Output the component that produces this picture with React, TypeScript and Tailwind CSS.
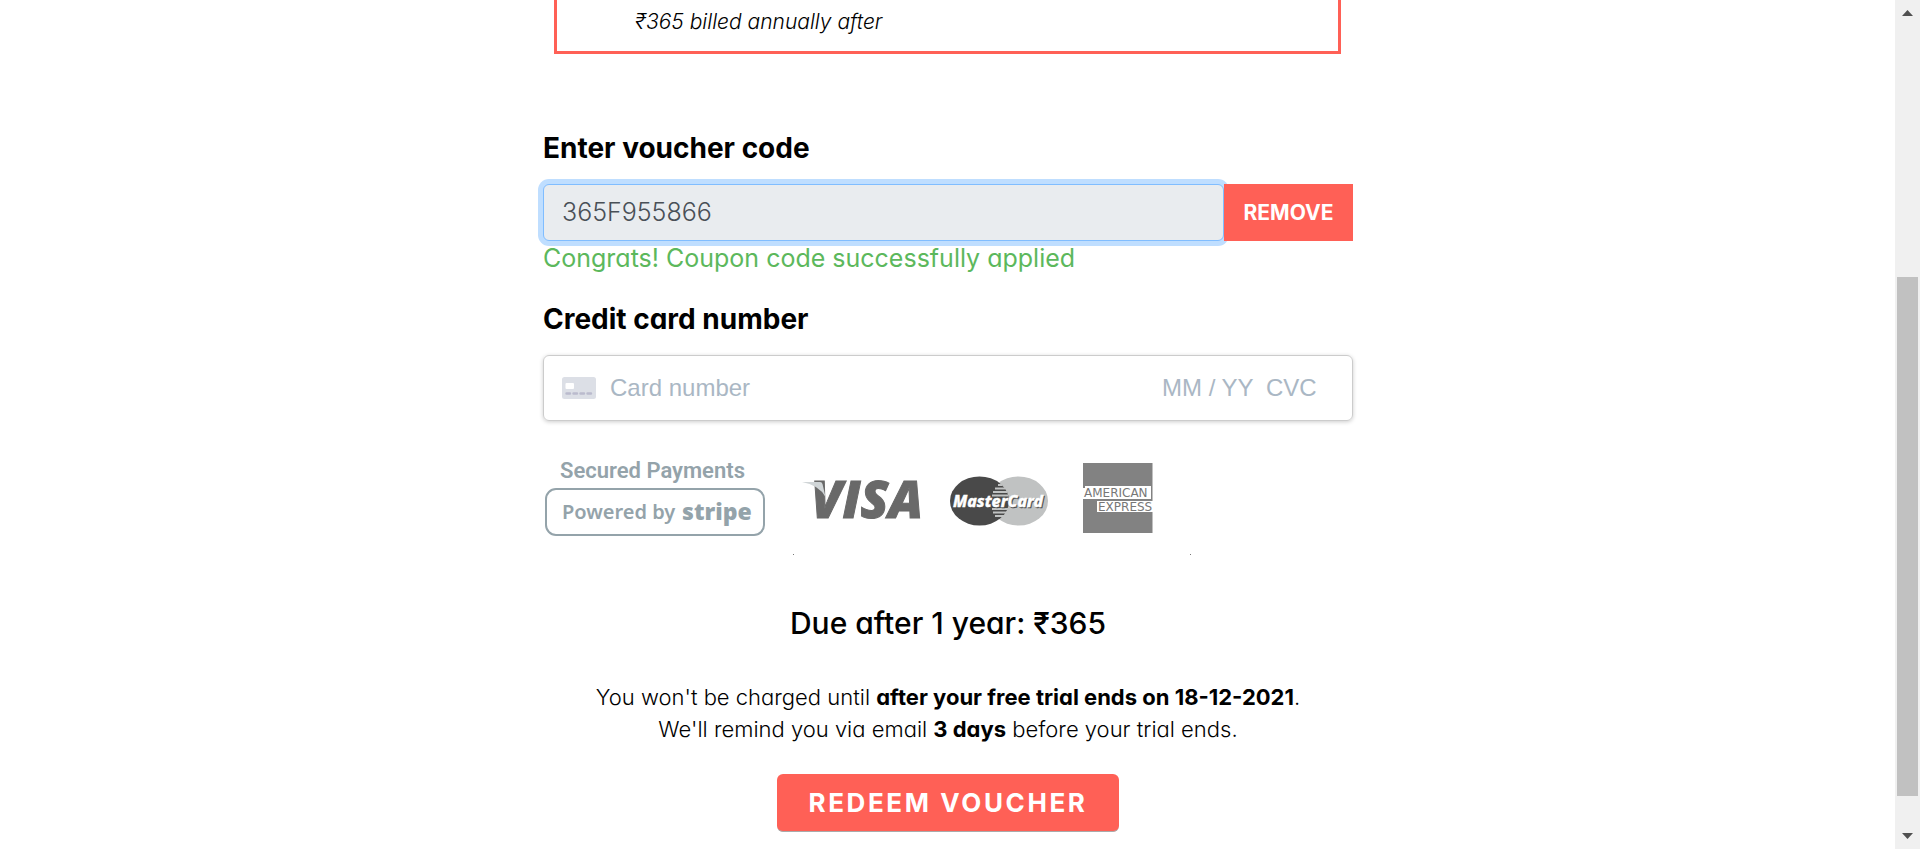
import React from "react";

function VoucherForm() {
  return (
    <section className="flex flex-col">
      <label htmlFor="voucher" className="text-[28px] leading-10 font-bold">
        Enter voucher code
      </label>
      <div className="mt-4 flex h-[57px]">
        <input
          id="voucher"
          readOnly
          defaultValue="365F955866"
          className="min-w-0 flex-1 rounded-md border border-[#80bdff] bg-[#e9ecef] px-[18px] text-[25px] font-light text-[#495057] shadow-[0_0_0_5px_#bfdeff] outline-none"
        />
        <button
          type="button"
          className="relative w-[129px] bg-[#ff6056] text-[21px] font-bold text-white"
        >
          REMOVE
        </button>
      </div>
      <p className="text-[25px] leading-[34px] text-[#5cb85c]">
        Congrats! Coupon code successfully applied
      </p>
    </section>
  );
}

function CardIcon() {
  return (
    <svg width="34" height="22" viewBox="0 0 34 22" aria-hidden="true" className="shrink-0">
      <rect width="34" height="22" rx="2.5" fill="#dcdfe6" />
      <rect x="3.5" y="6" width="8.5" height="6" rx="1" fill="#fff" />
      <path d="M4.500 16.500h3.500M11.500 16.500h3.500M18.500 16.500h3.500M25.500 16.500h3.500" stroke="#babbcd" strokeWidth="2.4" strokeLinecap="round" />
    </svg>
  );
}

function CardForm() {
  const field =
    "bg-transparent text-2xl text-[#32325d] placeholder:text-[#aab7c4] outline-none";
  return (
    <section className="mt-6 flex flex-col">
      <label htmlFor="card" className="text-[28px] leading-10 font-bold">
        Credit card number
      </label>
      <div className="mt-4 flex h-[66px] items-center rounded-md border border-[#ccc] px-[18px] font-['Liberation_Sans',sans-serif] shadow-[0_1px_4px_rgba(0,0,0,0.2)]">
        <CardIcon />
        <input id="card" placeholder="Card number" className={field + " ml-[14px] min-w-0 flex-1"} />
        <input aria-label="Expiry date" placeholder="MM / YY" className={field + " w-[104px]"} />
        <input aria-label="CVC" placeholder="CVC" className={field + " w-[68px]"} />
      </div>
    </section>
  );
}

function StripeBadge() {
  return (
    <svg width="224" height="80" viewBox="0 0 224 80" role="img" aria-label="Secured Payments, powered by Stripe">
      <g fill="#94a3aa" fontFamily="Roboto, sans-serif" fontWeight="600">
        <text x="17" y="19" fontSize="22">Secured Payments</text>
        <rect x="3" y="30" width="218" height="46" rx="10" fill="none" stroke="#94a3aa" strokeWidth="2" />
        <text x="19" y="60" fontSize="20" fontFamily="'Noto Sans', sans-serif">Powered by</text>
        <text x="139" y="61" fontSize="23" fontWeight="900" fontFamily="'Noto Sans', sans-serif">stripe</text>
      </g>
    </svg>
  );
}

function VisaLogo() {
  return (
    <svg width="124" height="40" viewBox="0 0 124 40" role="img" aria-label="Visa" className="overflow-visible">
      <text x="9" y="37" fontSize="51" fontWeight="800" fontStyle="italic" fill="#696969" stroke="#696969" strokeWidth="1" fontFamily="'Open Sans', sans-serif">
        VISA
      </text>
      <path d="M0 1h18q2 0 2.500 2l3 13Q17 4 0 1z" fill="#d0d5d7" />
    </svg>
  );
}

function MasterCardLogo() {
  return (
    <svg width="98" height="50" viewBox="0 0 98 50" role="img" aria-label="MasterCard">
      <ellipse cx="68.500" cy="25" rx="29.500" ry="24.500" fill="#c0c2c2" />
      <ellipse cx="29.500" cy="25" rx="29.500" ry="24.500" fill="#494949" />
      <path d="M48 9h4M45 12.500h10M43 16h14M42 19.500h16M42 33h16M43 36.500h14M45 40h10" stroke="#c0c2c2" strokeWidth="2" />
      <g fontFamily="'Noto Sans', sans-serif" fontSize="16" fontWeight="800" fontStyle="italic">
        <text x="4" y="32" fill="#494949" stroke="#494949" strokeWidth="0.5">MasterCard</text>
        <text x="3" y="31" fill="#fff" stroke="#fff" strokeWidth="0.4">MasterCard</text>
      </g>
    </svg>
  );
}

function AmexLogo() {
  return (
    <svg width="70" height="70" viewBox="0 0 70 70" role="img" aria-label="American Express">
      <rect width="69.500" height="70" fill="#828282" />
      <path d="M0 25h2v-2h66v13H0zM14 38h56v11H14z" fill="#fff" />
      <g fontFamily="'DejaVu Sans', sans-serif" fontSize="12" fill="#777">
        <text x="1" y="34">AMERICAN</text>
        <text x="15" y="48">EXPRESS</text>
      </g>
    </svg>
  );
}

function PaymentLogos() {
  return (
    <div className="mt-[38px] flex h-24 items-start">
      <StripeBadge />
      <div className="ml-[26px] flex h-24 w-[398px] flex-col justify-between">
        <div className="flex h-[80px] items-center pt-1 pl-[9px]">
          <VisaLogo />
          <div className="ml-6 flex"><MasterCardLogo /></div>
          <div className="-mt-[6px] ml-[35px] flex"><AmexLogo /></div>
        </div>
        <div className="flex justify-between">
          <span className="size-px bg-[#777]" />
          <span className="size-px bg-[#777]" />
        </div>
      </div>
    </div>
  );
}

function ScrollTrack() {
  return (
    <div aria-hidden="true" className="flex w-[25px] shrink-0 flex-col items-center bg-[#f0f0f0] py-[10px]">
      <svg width="11" height="6" viewBox="0 0 11 6"><path d="M0 6 5.500 0 11 6z" fill="#505050" /></svg>
      <div className="flex w-[21px] flex-1 flex-col">
        <div className="grow-[261]" />
        <div className="grow-[519] bg-[#c1c1c1]" />
        <div className="grow-[37]" />
      </div>
      <svg width="11" height="6" viewBox="0 0 11 6"><path d="M0 0 5.500 6 11 0z" fill="#505050" /></svg>
    </div>
  );
}

export default function App() {
  return (
    <div className="flex min-h-screen bg-white font-[Inter,sans-serif] text-black [font-feature-settings:'cv11']">
      <main className="flex min-w-0 flex-1 flex-col items-center pb-3">
        <div className="w-full max-w-[811px] pl-px">
          <div className="mr-3 ml-[11px] border-3 border-t-0 border-[#ff6056] px-[78px] pt-[7px] pb-[14px]">
            <p className="text-[21px] leading-[30px] font-light italic">₹365 billed annually after</p>
          </div>
          <div className="mt-[74px]">
            <VoucherForm />
          </div>
          <CardForm />
          <PaymentLogos />
          <section className="flex flex-col items-center text-center">
            <h2 className="mt-[46px] text-[30px] leading-[44px] font-medium">Due after 1 year: ₹365</h2>
            <p className="mt-9 text-[22px] leading-8 font-light">
              You won't be charged until <strong className="font-bold">after your free trial ends on 18-12-2021</strong>.
              <br />
              We'll remind you via email <strong className="font-bold">3 days</strong> before your trial ends.
            </p>
            <button
              type="button"
              className="mt-[29px] h-[58px] rounded-md border-b border-[#aaa] bg-[#ff6056] px-8 text-[26px] font-bold tracking-widest text-white"
            >
              REDEEM VOUCHER
            </button>
          </section>
        </div>
      </main>
      <ScrollTrack />
    </div>
  );
}
